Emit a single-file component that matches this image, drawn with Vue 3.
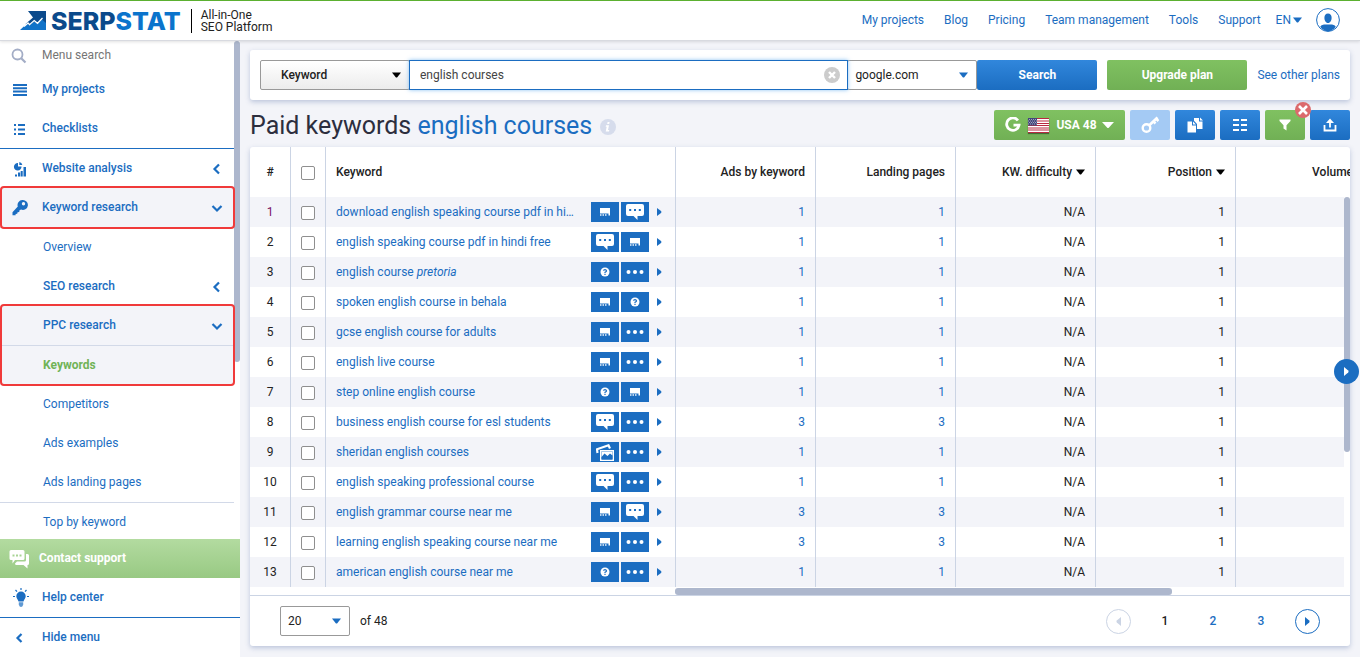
<script setup>
import { ref } from 'vue'

const query = ref('english courses')
const topLinks = ['My projects', 'Blog', 'Pricing', 'Team management', 'Tools', 'Support']

const menu = [
  { label: 'My projects', icon: 'bars', cls: 'top' },
  { label: 'Checklists', icon: 'list', cls: 'top rule-blue' },
  { label: 'Website analysis', icon: 'chart', arrow: 'left', cls: 'top' },
  { label: 'Keyword research', icon: 'key', arrow: 'down', cls: 'top shaded rule-gray boxed' },
  { label: 'Overview', cls: 'sub' },
  { label: 'SEO research', arrow: 'left', cls: 'sub strong' },
  { label: 'PPC research', arrow: 'down', cls: 'sub strong shaded rule-gray boxed boxed-two' },
  { label: 'Keywords', cls: 'sub strong shaded current' },
  { label: 'Competitors', cls: 'sub' },
  { label: 'Ads examples', cls: 'sub' },
  { label: 'Ads landing pages', cls: 'sub rule-gray' },
  { label: 'Top by keyword', cls: 'sub' }
]

const columns = [
  { label: 'Ads by keyword' },
  { label: 'Landing pages' },
  { label: 'KW. difficulty', sort: true },
  { label: 'Position', sort: true },
  { label: 'Volume', sort: true }
]

const rows = [
  { kw: 'download english speaking course pdf in hindi', a: 'ads', b: 'chat', n: 1 },
  { kw: 'english speaking course pdf in hindi free', a: 'chat', b: 'ads', n: 1 },
  { kw: 'english course ', em: 'pretoria', a: 'ask', b: 'dots', n: 1 },
  { kw: 'spoken english course in behala', a: 'ads', b: 'ask', n: 1 },
  { kw: 'gcse english course for adults', a: 'ads', b: 'dots', n: 1 },
  { kw: 'english live course', a: 'ads', b: 'dots', n: 1 },
  { kw: 'step online english course', a: 'ask', b: 'ads', n: 1 },
  { kw: 'business english course for esl students', a: 'chat', b: 'dots', n: 3 },
  { kw: 'sheridan english courses', a: 'images', b: 'dots', n: 1 },
  { kw: 'english speaking professional course', a: 'chat', b: 'dots', n: 1 },
  { kw: 'english grammar course near me', a: 'ads', b: 'chat', n: 3 },
  { kw: 'learning english speaking course near me', a: 'ads', b: 'dots', n: 3 },
  { kw: 'american english course near me', a: 'ask', b: 'dots', n: 1 }
]
</script>

<template>
  <div class="app">
    <header class="topbar">
      <a class="logo" href="#">
        <svg class="mark" width="27" height="19" viewBox="0 0 27 19" aria-hidden="true">
          <path d="M8 0H26V13L22 9.500L17.500 13.500L14.500 11L8 15.500L5.500 13L13 6.500Z" fill="#0b4a8b" />
          <path d="M0 19L7 12.500L9 14.500L14.500 10.500L17.500 13L22 8.500L26 12V19Z" fill="#1173c8" />
          <path d="M4 15.500L8 12L9.500 13.700L14.200 9.500L17.500 12.300L22.500 7" fill="none" stroke="#fff" stroke-width="1.300" />
        </svg>
        <span class="word">SERP<span class="word-b">STAT</span></span>
        <span class="tagline">All-in-One<br>SEO Platform</span>
      </a>
      <nav class="topnav">
        <a v-for="l in topLinks" :key="l" href="#">{{ l }}</a>
        <button class="lang" type="button">EN<svg width="9" height="6" viewBox="0 0 9 6"><path d="M0 .5H9L5.500 5Q4.500 6 3.500 5Z" fill="currentColor" /></svg></button>
        <button class="avatar" type="button" aria-label="Account">
          <svg width="24" height="24" viewBox="0 0 24 24">
            <circle cx="12" cy="12" r="11.400" fill="#fff" stroke="#1b6dc1" />
            <path d="M12 5.500c2.300 0 3.600 1.700 3.600 4.200 0 2.600-1.300 5.300-3.600 5.300s-3.600-2.700-3.600-5.300c0-2.500 1.300-4.200 3.600-4.200Z" fill="#1b6dc1" />
            <path d="M4.200 18.800Q5 16.800 8 16.600H16Q19 16.800 19.800 18.800Q16.500 23.200 12 23.200T4.200 18.800Z" fill="#1b6dc1" />
          </svg>
        </button>
      </nav>
    </header>

    <div class="body">
      <aside class="sidebar">
        <div class="scroller">
          <label class="menu-search">
            <svg width="16" height="16" viewBox="0 0 16 16" fill="none" stroke="#a3adc6" stroke-width="1.800"><circle cx="6.500" cy="6.500" r="5" /><path d="M10.200 10.200L14.500 14.500" stroke-width="2.200" /></svg>
            <input type="text" placeholder="Menu search" aria-label="Menu search">
          </label>
          <a v-for="m in menu" :key="m.label" href="#" class="item" :class="m.cls">
            <span class="ico">
              <svg v-if="m.icon === 'bars'" width="16" height="14" viewBox="0 0 16 14" fill="currentColor"><path d="M1 1H15V3H1ZM1 4.300H15V6.300H1ZM1 7.600H15V9.600H1ZM1 11H15V13H1Z" /></svg>
              <svg v-else-if="m.icon === 'list'" width="16" height="12" viewBox="0 0 16 12" fill="currentColor"><path d="M2 1H4V3H2ZM6 1H13V3H6ZM2 5.500H4V7.500H2ZM6 5.500H13V7.500H6ZM2 10H4V12H2ZM6 10H13V12H6Z" /></svg>
              <svg v-else-if="m.icon === 'chart'" width="16" height="18" viewBox="0 0 16 18" fill="currentColor"><path d="M6 3V6.500H9.500A3.800 3.800 0 1 1 6 3Z" /><path d="M7.300 2A3.500 3.500 0 0 1 10.300 5H7.300Z" /><rect x="3" y="14.500" width="2" height="2" /><rect x="6" y="12.500" width="2.200" height="4" /><rect x="8.700" y="11" width="2" height="5.500" /><rect x="11.500" y="7" width="2.500" height="9.500" /></svg>
              <svg v-else-if="m.icon === 'key'" width="16" height="17" viewBox="0 0 16 17"><path fill-rule="evenodd" fill="currentColor" d="M10.300 1A5 5 0 1 1 9 10.600L7.300 11.600V13L5.600 13.300L5.200 14.800L3.600 15V16.200H.5V13.200L5.800 7.600A5 5 0 0 1 10.300 1ZM11.500 3A1.700 1.700 0 1 0 11.500 6.400A1.700 1.700 0 0 0 11.500 3Z" /></svg>
            </span>
            <span class="name">{{ m.label }}</span>
            <svg v-if="m.arrow === 'left'" class="chev" width="12" height="12" viewBox="0 0 12 12"><path d="M8 1.500L3.500 6L8 10.500" /></svg>
            <svg v-if="m.arrow === 'down'" class="chev" width="12" height="12" viewBox="0 0 12 12"><path d="M1.500 4L6 8.500L10.500 4" /></svg>
          </a>
          <div class="side-thumb"></div>
        </div>
        <button class="contact" type="button">
          <svg width="21" height="20" viewBox="0 0 21 20" fill="#fff">
            <path fill-rule="evenodd" d="M2 1H14Q15.500 1 15.500 2.500V9.500Q15.500 11 14 11H6L3.500 14.500V11H2Q.5 11 .5 9.500V2.500Q.5 1 2 1ZM3.500 5.500V7.500H5.500V5.500ZM7 5.500V7.500H9V5.500ZM10.500 5.500V7.500H12.500V5.500Z" />
            <path d="M17 5H18.500Q20 5 20 6.500V14.500Q20 16 18.500 16V19.500L14.500 16H7.500Q6 16 6 14.500L8 12.500H15.500Q17 12.500 17 11Z" />
          </svg>
          <span class="name">Contact support</span>
        </button>
        <a class="item top foot-item" href="#">
          <span class="ico bulb"><svg width="18" height="20" viewBox="0 0 18 20" fill="currentColor"><path d="M9 3.500A4.700 4.700 0 0 1 13.700 8.200C13.700 10.500 11.800 11.500 11.500 13.500H6.500C6.200 11.500 4.300 10.500 4.300 8.200A4.700 4.700 0 0 1 9 3.500Z" /><path d="M6.800 14.300H11.200V16.800Q10.500 19 9 19T6.800 16.800Z" opacity=".7" /><path d="M9 0V2M3.500 2L5 3.700M14.500 2L13 3.700M1 8.500H3M15 8.500H17" stroke="currentColor" stroke-width="1.200" /></svg></span>
          <span class="name">Help center</span>
        </a>
        <button class="item top hide" type="button">
          <span class="ico"><svg class="chev-s" width="16" height="12" viewBox="0 0 16 12"><path d="M9.500 2L5.500 6L9.500 10" /></svg></span>
          <span class="name">Hide menu</span>
        </button>
      </aside>

      <main class="main">
        <form class="card search" @submit.prevent>
          <div class="sel kind">
            <select aria-label="Search type"><option>Keyword</option></select>
            <svg class="tri" width="9" height="6" viewBox="0 0 9 6"><path d="M0 .5H9L5.500 5Q4.500 6 3.500 5Z" /></svg>
          </div>
          <div class="query">
            <input v-model="query" type="text" aria-label="Query">
            <button type="button" aria-label="Clear" @click="query = ''">
              <svg width="16" height="16" viewBox="0 0 16 16"><circle cx="8" cy="8" r="8" fill="#ccc" /><path d="M5 5L11 11M11 5L5 11" stroke="#fff" stroke-width="2.400" /></svg>
            </button>
          </div>
          <div class="sel engine">
            <select aria-label="Search engine"><option>google.com</option></select>
            <svg class="tri" width="9" height="6" viewBox="0 0 9 6"><path d="M0 .5H9L5.500 5Q4.500 6 3.500 5Z" /></svg>
          </div>
          <button class="btn blue go" type="submit">Search</button>
          <button class="btn green upgrade" type="button">Upgrade plan</button>
          <a class="plans" href="#">See other plans</a>
        </form>

        <div class="heading">
          <h1>Paid keywords <span>english courses</span></h1>
          <svg class="info" width="16" height="16" viewBox="0 0 16 16"><circle cx="8" cy="8" r="8" fill="#d6dcec" /><path d="M7.600 3H9.600L9.200 5H7.200ZM6 6.300H9L8 11H9.300L9 12.500H5.700L6.700 7.800H5.700Z" fill="#fff" /></svg>
          <div class="tools">
            <button class="btn green region" type="button">
              <svg width="16" height="16" viewBox="0 0 16 16" fill="none" stroke="#fff" stroke-width="2.800"><path d="M12.900 3.500A6.200 6.200 0 1 0 14 8.200H8.500" /></svg>
              <svg class="flag" width="21" height="15" viewBox="0 0 21 15">
                <rect width="21" height="15" fill="#fff" />
                <path d="M0 .5H21M0 3H21M0 5.500H21M0 7.500H21M0 10H21M0 12H21M0 14.500H21" stroke="#b92a40" stroke-width="1.100" />
                <rect width="9" height="7.500" fill="#43477a" />
                <path d="M1 1.500H9M0 3H9M1 4.500H9M0 6H9" stroke="#b9bbd2" stroke-width=".8" stroke-dasharray="1 1" />
              </svg>
              USA 48
              <svg width="12" height="8" viewBox="0 0 12 8"><path d="M0 1H12L7 6.500Q6 7.500 5 6.500Z" fill="#fff" /></svg>
            </button>
            <button class="btn pale tool" type="button" aria-label="Keys" disabled>
              <svg width="18" height="18" viewBox="0 0 18 18" fill="none" stroke="#fff"><circle cx="5.500" cy="12" r="3.800" stroke-width="2.400" /><path d="M8.300 9.300L16.500 1.500" stroke-width="2.600" /><path d="M12 5L14.500 7.500M15 2.500L17.500 5" stroke-width="2.600" /></svg>
            </button>
            <button class="btn blue tool" type="button" aria-label="Copy">
              <svg width="16" height="16" viewBox="0 0 16 16" fill="#fff"><path d="M.5 4.500H5V8.500H9V15.500H.5ZM6 4.500L9 7.500H6Z" /><path d="M7 1H12V4.500H15.500V12H10V7L7 3.800Z" /><path d="M13 .5L16 3.500H13Z" /></svg>
            </button>
            <button class="btn blue tool" type="button" aria-label="Columns">
              <svg width="14" height="12" viewBox="0 0 14 12"><path d="M0 1H6M8 1H14M0 6H6M8 6H14M0 11H6M8 11H14" stroke="#fff" stroke-width="2" /></svg>
            </button>
            <button class="btn green tool filter" type="button" aria-label="Filter">
              <svg width="12" height="12" viewBox="0 0 12 12"><path d="M.5 .5H11.500V2L7.500 6.200V11.500L4.500 9.500V6.200L.5 2Z" fill="#fff" /></svg>
              <svg class="badge" width="16" height="16" viewBox="0 0 16 16"><circle cx="8" cy="8" r="8" fill="#dc6a6c" /><path d="M4 4L12 12M12 4L4 12" stroke="#fff" stroke-width="2.600" /></svg>
            </button>
            <button class="btn blue tool" type="button" aria-label="Export">
              <svg width="14" height="14" viewBox="0 0 14 14" fill="none" stroke="#fff" stroke-width="1.800"><path d="M1.500 7V12.500H12.500V7M7 9.500V2" /><path d="M3 5L7 .5L11 5Z" fill="#fff" stroke="none" /></svg>
            </button>
          </div>
        </div>

        <section class="card results">
          <div class="viewport">
            <table>
              <colgroup><col class="c-num"><col class="c-check"><col class="c-kw"><col v-for="c in columns" :key="c.label" class="c-val"></colgroup>
              <thead>
                <tr>
                  <th class="mid">#</th>
                  <th class="mid"><input type="checkbox" aria-label="Select all"></th>
                  <th>Keyword</th>
                  <th v-for="c in columns" :key="c.label" class="num" :class="{ open: c.label === 'Volume' }">
                    {{ c.label }}
                    <svg v-if="c.sort" width="9" height="6" viewBox="0 0 9 6"><path d="M0 .5H9L5.500 5Q4.500 6 3.500 5Z" /></svg>
                  </th>
                </tr>
              </thead>
              <tbody>
                <tr v-for="(r, i) in rows" :key="r.kw">
                  <td class="mid" :class="{ visited: i === 0 }">{{ i + 1 }}</td>
                  <td class="mid"><input type="checkbox" :aria-label="'Select ' + r.kw"></td>
                  <td>
                    <div class="kw">
                      <a href="#">{{ r.kw }}<em v-if="r.em">{{ r.em }}</em></a>
                      <span v-for="k in [r.a, r.b]" :key="k" class="chip">
                        <svg v-if="k === 'ads'" width="10" height="8" viewBox="0 0 10 8" fill="#fff"><path d="M0 0H10V7.500H8.500V5.500H0Z" /><path d="M0 6H1.500V8H0ZM2.500 6H4V8H2.500ZM5 6H6.500V8H5Z" opacity=".7" /></svg>
                        <svg v-else-if="k === 'chat'" width="18" height="16" viewBox="0 0 18 16"><path fill-rule="evenodd" fill="#fff" d="M2 0H16Q18 0 18 2V10Q18 12 16 12H11.500V16L7.500 12H2Q0 12 0 10V2Q0 0 2 0ZM3.200 5V7H5.200V5ZM8 5V7H10V5ZM12.800 5V7H14.800V5Z" /></svg>
                        <svg v-else-if="k === 'ask'" width="10" height="10" viewBox="0 0 10 10"><circle cx="5" cy="5" r="4.500" fill="#fff" /><path d="M3.500 3.700Q3.700 2.600 5 2.600T6.500 3.900Q6.500 4.600 5 5.300V6M5 6.800V8" fill="none" stroke="#1b6dc1" stroke-width="1.200" /></svg>
                        <svg v-else-if="k === 'images'" width="18" height="17" viewBox="0 0 18 17"><path d="M1.500 9L1 5.300L12.500 1.300L14 4.500" fill="none" stroke="#fff" stroke-width="2.200" /><path fill-rule="evenodd" fill="#fff" d="M4 6H18V17H4ZM5.500 7.500V15.500H16.500V7.500Z" /><path d="M5.500 7.500H16.500V15.500H5.500Z" fill="#1b6dc1" /><path d="M5.500 7.500H16.500V11.500L14 9.500L11.500 12L8.500 9.500L5.500 13Z" fill="#fff" /></svg>
                        <svg v-else width="18" height="4" viewBox="0 0 18 4" fill="#fff"><circle cx="2.500" cy="2" r="2" /><circle cx="9" cy="2" r="2" /><circle cx="15.500" cy="2" r="2" /></svg>
                      </span>
                      <button class="more" type="button" aria-label="More"><svg width="5" height="8" viewBox="0 0 5 8"><path d="M0 0L4 3Q5 4 4 5L0 8Z" fill="#1b6dc1" /></svg></button>
                    </div>
                  </td>
                  <td class="num"><a href="#">{{ r.n }}</a></td>
                  <td class="num"><a href="#">{{ r.n }}</a></td>
                  <td class="num">N/A</td>
                  <td class="num">1</td>
                  <td class="open"></td>
                </tr>
              </tbody>
            </table>
            <div class="vtrack"><div class="vthumb"></div></div>
          </div>
          <div class="htrack"><div class="hthumb"></div></div>
          <footer class="pager">
            <div class="sel size">
              <select aria-label="Rows per page"><option>20</option></select>
              <svg class="tri" width="9" height="6" viewBox="0 0 9 6"><path d="M0 .5H9L5.500 5Q4.500 6 3.500 5Z" /></svg>
            </div>
            <span class="total">of 48</span>
            <button class="round off" type="button" aria-label="Previous page" disabled><svg width="5" height="9" viewBox="0 0 5 9"><path d="M5 0V9L.8 5.500Q0 4.500 .8 3.500Z" fill="currentColor" /></svg></button>
            <div class="pages">
              <button class="now" type="button">1</button>
              <button type="button">2</button>
              <button type="button">3</button>
            </div>
            <button class="round" type="button" aria-label="Next page"><svg width="5" height="9" viewBox="0 0 5 9"><path d="M0 0V9L4.200 5.500Q5 4.500 4.200 3.500Z" fill="currentColor" /></svg></button>
          </footer>
        </section>
      </main>
    </div>
    <button class="float" type="button" aria-label="Scroll right"><svg width="5" height="9" viewBox="0 0 5 9"><path d="M0 0V9L4.200 5.500Q5 4.500 4.200 3.500Z" fill="#fff" /></svg></button>
  </div>
</template>

<style>
body { margin: 0; background: #f3f4f9; }
</style>

<style scoped>
.app {
  display: flex;
  flex-direction: column;
  height: 100vh;
  overflow: hidden;
  font: 12px/16px Roboto, "Liberation Sans", sans-serif;
  color: #222;
}
.app *, .app *::before { box-sizing: border-box; }
a { color: #1b6dc1; text-decoration: none; }
button, input, select { font: inherit; color: inherit; margin: 0; }
button { border: 0; padding: 0; background: none; }
svg { flex: none; }

.topbar {
  display: flex;
  align-items: center;
  justify-content: space-between;
  height: 41px;
  flex: none;
  padding: 0 20px;
  border-top: 1px solid #5bb030;
  border-bottom: 1px solid #d8dae0;
  background: #fff;
  box-shadow: 0 1px 3px rgba(0, 0, 0, .12);
  position: relative;
  z-index: 2;
}
.logo { display: flex; align-items: center; color: #0b4a8b; }
.word { margin-left: 4px; font: 800 25px/26px Inter, sans-serif; }
.word-b { color: #0b74cc; }
.tagline {
  margin-left: 10px;
  padding-left: 9px;
  border-left: 1px solid #000;
  color: #222;
  line-height: 12px;
}
.topnav { display: flex; align-items: center; gap: 20px; padding-bottom: 1px; }
.lang { display: flex; align-items: center; gap: 2px; margin-left: -5px; color: #1b6dc1; }
.avatar { display: flex; margin-left: -6px; }

.body { display: flex; flex: 1; min-height: 0; }
.sidebar { display: flex; flex-direction: column; flex: none; width: 240px; background: #fff; }
.scroller { position: relative; flex: 1; min-height: 0; padding-right: 6px; overflow: hidden; }
.side-thumb { position: absolute; top: 0; right: 0; width: 6px; height: 321px; border-radius: 3px; background: #adb7cd; }
.menu-search { display: flex; align-items: center; height: 29px; padding-left: 11px; }
.menu-search input { flex: 1; min-width: 0; margin-left: 15px; padding: 0 0 2px; border: 0; outline: 0; }
.menu-search input::placeholder { color: #757575; opacity: 1; }
.item {
  position: relative;
  display: flex;
  align-items: center;
  width: 100%;
  height: 39px;
  padding: 0 11px 0 12px;
  color: #1b6dc1;
  text-align: left;
}
.ico { display: flex; width: 16px; margin-right: 14px; }
.bulb svg { margin-right: -2px; }
.top, .strong { font-weight: 500; }
.sub { padding-left: 13px; }
.name { flex: 1; padding-bottom: 2px; text-align: left; }
.shaded { background: #f3f4f9; }
.rule-blue, .rule-gray { height: 40px; border-bottom: 1px solid #1b6dc1; }
.rule-gray { border-bottom-color: #d2d9e8; }
.current { color: #70b357; font-weight: 700; }
.boxed::before {
  content: "";
  position: absolute;
  z-index: 1;
  inset: -2px -1px -2px 0;
  border: 2px solid #f03a3a;
  border-radius: 4px;
}
.boxed-two::before { bottom: -41px; }
.chev, .chev-s { fill: none; stroke: #1b6dc1; stroke-width: 2.200; }
.contact {
  display: flex;
  align-items: center;
  gap: 9px;
  height: 39px;
  padding: 0 9px;
  background: linear-gradient(#b3dba0, #98c983);
  color: #fff;
  font-weight: 700;
}
.foot-item { height: 40px; border-bottom: 1px solid #1b6dc1; }

.main { flex: 1; min-width: 0; padding: 9px 10px 10px; background: #f3f4f9; }
.card { border-radius: 3px; background: #fff; box-shadow: 0 2px 5px rgba(120, 140, 185, .45); }
.search { display: flex; align-items: center; height: 50px; padding: 0 10px; }
.sel { position: relative; flex: none; height: 30px; }
.sel select {
  width: 100%;
  height: 100%;
  padding: 0 7px;
  border: 1px solid #999;
  border-radius: 2px;
  appearance: none;
  background: #fff;
  outline: 0;
}
.tri { position: absolute; top: 12px; right: 9px; fill: #1b6dc1; pointer-events: none; }
.kind { width: 150px; }
.kind select { padding-left: 20px; background: linear-gradient(#fff, #ececec); color: #222; font-weight: 500; }
.kind .tri { fill: #000; }
.query { position: relative; flex: 1; min-width: 0; height: 30px; margin: 0 -1px; z-index: 1; }
.query input {
  width: 100%;
  height: 100%;
  padding: 0 30px 0 10px;
  border: 1px solid #1b6dc1;
  outline: 0;
  color: #444;
  box-shadow: 0 0 4px rgba(90, 170, 240, .7);
}
.query button { position: absolute; top: 7px; right: 8px; display: flex; }
.engine { width: 130px; }
.btn {
  display: flex;
  align-items: center;
  justify-content: center;
  height: 30px;
  border-radius: 2px;
  color: #fff;
  font-weight: 700;
}
.blue { background: linear-gradient(#3187dc, #1b6dc1); }
.green { background: linear-gradient(#80c161, #71b055); }
.pale { background: #a4caf4; }
.go { width: 120px; }
.upgrade { width: 140px; margin: 0 10px; }

.heading { display: flex; align-items: flex-start; height: 47px; padding-top: 10px; }
h1 { margin: 0; color: #2c2e3e; font-size: 25px; font-weight: 400; line-height: 32px; }
h1 span { color: #1b6dc1; }
.info { margin: 9px 0 0 8px; }
.tools { display: flex; gap: 5px; margin-left: auto; }
.region { width: 131px; gap: 7px; }
.region svg:last-child { margin-left: -2px; }
.flag { box-shadow: 0 1px 1px rgba(0, 0, 0, .4); }
.tool { width: 40px; }
.filter { position: relative; }
.badge { position: absolute; top: -8px; right: -6px; z-index: 1; }

.viewport { position: relative; overflow: hidden; border-radius: 3px 3px 0 0; }
table { width: 100%; min-width: 1126px; border-collapse: separate; border-spacing: 0; table-layout: fixed; }
.c-num { width: 41px; }
.c-check { width: 35px; }
.c-kw { width: 350px; }
.c-val { width: 140px; }
th { height: 50px; padding: 0 10px; border-right: 1px solid #cbd4e4; font-weight: 500; text-align: left; white-space: nowrap; }
td { height: 30px; padding: 0 10px; border-right: 1px solid #cbd4e4; }
tbody tr:nth-child(odd) { background: #f3f4f9; }
th.mid, td.mid { padding: 0; text-align: center; }
th.num, td.num { text-align: right; }
th.open, td.open { border-right: 0; }
th svg { margin-left: 1px; vertical-align: 1px; }
.visited { color: #7a1565; }
input[type="checkbox"] {
  width: 14px;
  height: 14px;
  border: 1px solid #8f8f8f;
  border-radius: 2px;
  appearance: none;
  background: #fff;
  vertical-align: middle;
  margin-top: 2px;
}
.kw { display: flex; align-items: center; gap: 2px; }
.kw a { width: 240px; margin-right: 13px; overflow: hidden; text-overflow: ellipsis; white-space: nowrap; }
.chip { display: flex; align-items: center; justify-content: center; width: 28px; height: 20px; background: #1b6dc1; }
.more { display: flex; margin-left: 6px; }
.vtrack { position: absolute; top: 50px; right: 0; bottom: 0; width: 6px; background: #fff; }
.vthumb { height: 255px; border-radius: 3px; background: #adb7cd; }
.htrack { height: 8px; padding: 1px 178px 0 425px; }
.hthumb { height: 7px; border-radius: 3px; background: #adb7cd; }
.pager { display: flex; align-items: center; padding: 10px 30px; border-top: 1px solid #cbd4e4; }
.size { width: 70px; }
.total { margin: 0 auto 0 10px; }
.round {
  display: flex;
  align-items: center;
  justify-content: center;
  width: 25px;
  height: 25px;
  border: 1px solid #1b6dc1;
  border-radius: 50%;
  color: #1b6dc1;
}
.off { border-color: #cbd4e4; color: #cbd4e4; }
.pages { display: flex; margin: 0 10px; }
.pages button { width: 48px; color: #1b6dc1; font-weight: 500; }
.pages .now { color: #222; }
.float {
  position: fixed;
  top: 359px;
  right: 1px;
  z-index: 3;
  display: flex;
  align-items: center;
  justify-content: center;
  width: 25px;
  height: 25px;
  border-radius: 50%;
  background: #1b6dc1;
}
</style>
